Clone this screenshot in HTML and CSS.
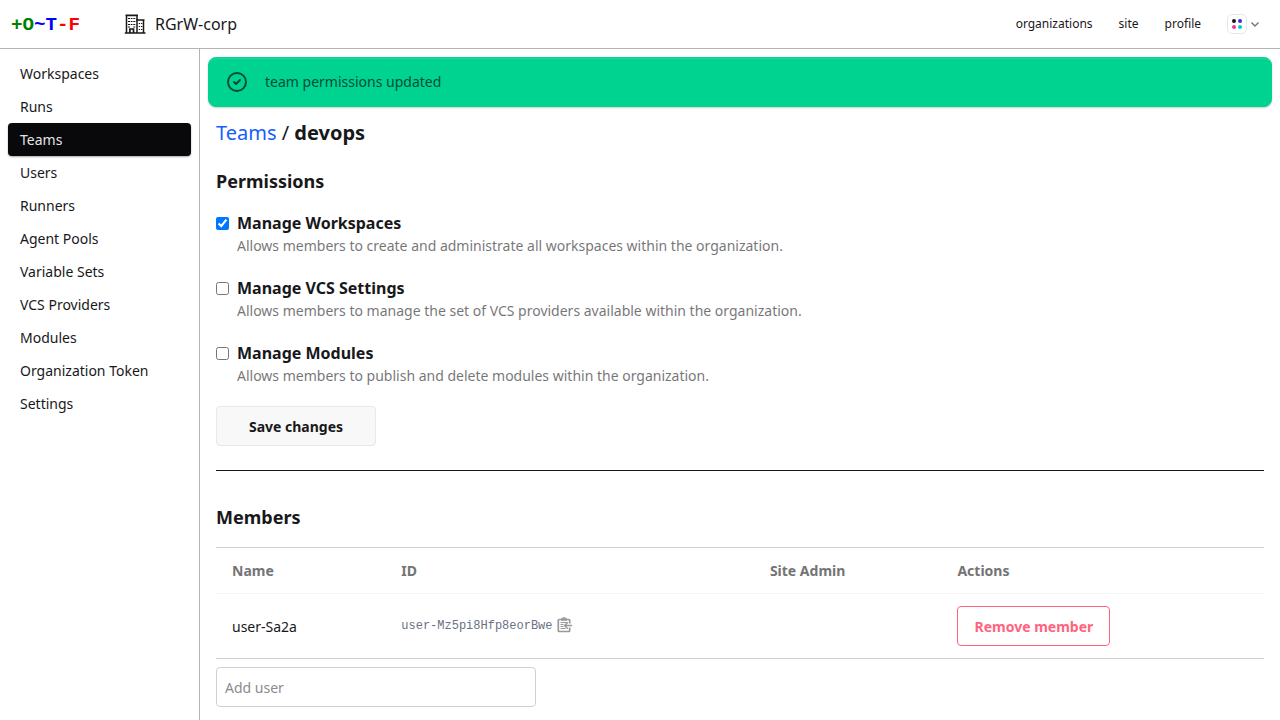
FILE: index.html
```html
<!DOCTYPE html>
<html lang="en">
<head>
<meta charset="utf-8">
<title>devops | Teams</title>
<link rel="stylesheet" href="styles.css">
</head>
<body>
<header class="navbar">
  <a class="logo"><span class="green">+O</span><span class="blue">~T</span><span class="red">-F</span></a>
  <a class="org">
    <svg class="org-icon" viewBox="0 0 22 20" fill="none" stroke="currentColor">
      <path d="M2.500 19V1.500h10.500V19M13 6h6.500v13M1.500 1.200h12.500M12 6h8.500" stroke-width="1.500"/>
      <path d="M.8 19h20.700M5.900 19v-4h3.600v4" stroke-width="1.700"/>
      <path d="M4 4.500h2M6.700 4.500h1.800M9.300 4.500h2M4 7.500h2M6.700 7.500h1.800M9.300 7.500h2M4 10.500h2M6.700 10.500h1.800M9.300 10.500h2M4 13h2M9.300 13h2M14.800 9.500h1.300M17 9.500h1.300M14.800 12.500h1.300M17 12.500h1.300M14.800 15.500h1.300M17 15.500h1.300" stroke-width="1.200"/>
    </svg>
    <span>RGrW-corp</span>
  </a>
  <nav class="top-links"><a>organizations</a><a>site</a><a>profile</a>
    <button class="theme"><span class="swatch"><i class="dot dark"></i><i class="dot indigo"></i><i class="dot pink"></i><i class="dot teal"></i></span>
      <svg class="chevron" viewBox="0 0 8 5" fill="none" stroke="currentColor" stroke-width="1.4"><path d="M.5 .5 4 4 7.500 .5"/></svg></button>
  </nav>
</header>
<div class="layout">
  <aside class="sidebar">
    <a>Workspaces</a><a>Runs</a><a class="active">Teams</a><a>Users</a><a>Runners</a><a>Agent Pools</a><a>Variable Sets</a><a>VCS Providers</a><a>Modules</a><a>Organization Token</a><a>Settings</a>
  </aside>
  <main class="main">
    <div class="alert">
      <svg class="alert-icon" viewBox="0 0 24 24" fill="none" stroke="currentColor" stroke-width="2" stroke-linecap="round" stroke-linejoin="round"><path d="M9 12l2 2 4-4m6 2a9 9 0 11-18 0 9 9 0 0118 0z"/></svg>
      <span>team permissions updated</span>
    </div>
    <div class="content">
      <div class="crumbs"><a class="link">Teams</a> / <b>devops</b></div>
      <h3 class="heading">Permissions</h3>
      <form class="permissions">
        <label class="permission"><input class="check" type="checkbox" checked><span class="label">Manage Workspaces</span><span class="description">Allows members to create and administrate all workspaces within the organization.</span></label>
        <label class="permission"><input class="check" type="checkbox"><span class="label">Manage VCS Settings</span><span class="description">Allows members to manage the set of VCS providers available within the organization.</span></label>
        <label class="permission"><input class="check" type="checkbox"><span class="label">Manage Modules</span><span class="description">Allows members to publish and delete modules within the organization.</span></label>
        <button class="btn save" type="button">Save changes</button>
      </form>
      <hr class="rule">
      <h3 class="heading members-heading">Members</h3>
      <div class="table">
        <div class="row head"><span>Name</span><span>ID</span><span>Site Admin</span><span>Actions</span></div>
        <div class="row body"><span class="name">user-Sa2a</span>
          <span class="id"><span class="id-text">user-Mz5pi8Hfp8eorBwe</span>
            <svg class="copy" viewBox="0 0 15 16" fill="none" stroke="currentColor"><path d="M12.700 6.500V3.500q0-1-1-1H2.300q-1 0-1 1v10q0 1 1 1h9.400q1 0 1-1v-3" stroke-width="1.700"/><path d="M4 2.500h6" stroke-width="2.500"/><path d="M5.500 1h3" stroke-width="1.500"/><path d="M3.500 5.500H9.500M3.500 7.500h3M3.500 9.500h3M3.500 11.500h5" stroke-width="1.200"/><path d="M15 8.500H8M10.800 5.300L7.600 8.500l3.200 3.200" stroke-width="1.500"/></svg></span>
          <span></span><span><button class="btn remove" type="button">Remove member</button></span></div>
      </div>
      <input class="add-user" type="text" placeholder="Add user">
    </div>
  </main>
</div>
</body>
</html>
```
FILE: styles.css
```css
* { box-sizing: border-box; }
body { margin: 0; height: 720px; overflow: hidden; color: #18181b; background: #fff; font: 14px/20px "Noto Sans", sans-serif; }
button, input { font: inherit; }
.navbar { display: flex; align-items: center; height: 49px; border-bottom: 1px solid #b2b3b2; padding: 0 21px 0 11px; }
.logo { width: 113px; padding-top: 2px; font: bold 19.2px/24px "Liberation Mono", monospace; }
.green { color: #008000; }
.blue { color: #00f; }
.red { color: #f00; }
.org { display: flex; align-items: center; gap: 9px; font-size: 16px; line-height: 24px; }
.org-icon { width: 22px; height: 20px; }
.top-links { display: flex; align-items: center; gap: 26px; margin-left: auto; font-size: 12px; line-height: 16px; }
.theme { display: flex; align-items: center; gap: 4px; padding: 0; border: 0; background: none; color: #747475; }
.swatch { display: grid; grid-template-columns: 4px 4px; gap: 2px; width: 20px; height: 20px; place-content: center; border: 1px solid #e8e8e8; border-radius: 5px; }
.dot { width: 4px; height: 4px; border-radius: 50%; }
.dark { background: #18181b; }
.indigo { background: #422ad5; }
.pink { background: #f43098; }
.teal { background: #00d3bb; }
.chevron { width: 8px; height: 5px; }
.layout { display: flex; height: 671px; }
.sidebar { flex: none; display: flex; flex-direction: column; width: 200px; padding: 8px; border-right: 1px solid #b2b3b2; }
.sidebar a { height: 33px; padding: 6px 12px; line-height: 21px; border-radius: 4px; }
.sidebar .active { color: #e4e4e7; background: #09090b; box-shadow: 0 1px 2px #0005; }
.main { flex: 1; padding: 8px; }
.alert { display: flex; align-items: center; gap: 16px; height: 50px; padding: 0 16px; color: #004c39; background: #00d390; border-radius: 8px; border: 1px solid #00d390; box-shadow: 0 1px 2px #0003, inset 0 1px #fff2; }
.alert-icon { width: 24px; height: 24px; }
.content { padding: 0 8px; }
.crumbs { padding-top: 12px; font-size: 20px; line-height: 28px; }
.link { color: #155dfc; }
.heading { margin: 20px 0 0; font-size: 18px; line-height: 28px; font-weight: 700; }
.permissions { padding-top: 16px; }
.permission { display: grid; grid-template-columns: 13px 1fr; column-gap: 8px; align-items: center; height: 65px; align-content: start; }
.check { width: 13px; height: 13px; margin: 0; }
.label { font-size: 16px; line-height: 24px; font-weight: 700; }
.description { grid-column: 2; padding-top: 1px; line-height: 20px; opacity: .6; }
.btn { height: 40px; padding: 1px 0 0; border-radius: 4px; font-weight: 700; }
.save { display: block; width: 160px; border: 1px solid #e8e8e8; background: #f8f8f8; color: #18181b; }
.rule { height: 1px; margin: 24px 0 0; border: 0; background: #18181b; }
.members-heading { margin-top: 32px; }
.table { margin-top: 16px; border: solid #d1d1d1; border-width: 1px 0; }
.row { display: grid; grid-template-columns: 169.3px 368.6px 187.500px 1fr; align-items: center; padding-left: 16px; }
.head { height: 46px; border-bottom: 1px solid #f3f3f3; font-weight: 700; color: #747475; }
.body { height: 64px; }
.name { padding-top: 2px; }
.id { display: flex; align-items: center; gap: 4.4px; padding-bottom: 3px; font: 12px/16px "Liberation Mono", monospace; color: #6a7282; }
.id-text { padding-top: 2px; }
.copy { width: 15px; height: 16px; color: #999; }
.remove { display: block; width: 153px; border: 1px solid #ff637d; background: #fff; color: #ff637d; }
.add-user { display: block; width: 320px; height: 40px; margin-top: 8px; padding: 0 8px; border: 1px solid #d1d1d1; border-radius: 4px; }
.add-user::placeholder { color: #8b8b8d; }
```
